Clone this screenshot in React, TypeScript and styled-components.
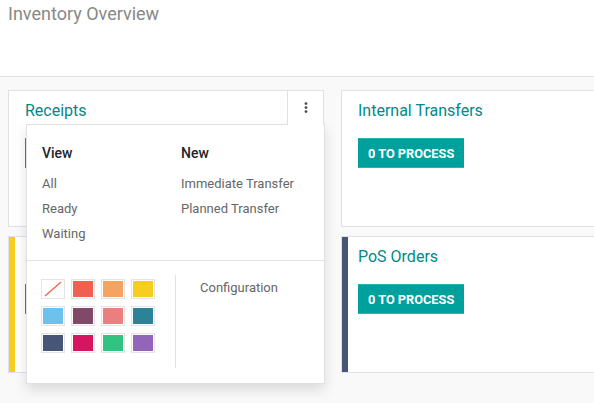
import React from "react";
import styled, { createGlobalStyle } from "styled-components";

const Global = createGlobalStyle`
  html, body { margin: 0; padding: 0; background: #f9f9f9; }
  body { font-family: Roboto, "Noto Sans", sans-serif; width: 594px; height: 403px; overflow: hidden; }
  * { box-sizing: border-box; }
`;

const Page = styled.div`
  width: 594px;
  height: 403px;
  overflow: hidden;
  display: flex;
  flex-direction: column;
`;

const ControlPanel = styled.div`
  height: 77px;
  background: #fff;
  border-bottom: 1px solid #dee2e6;
  padding: 2px 8px 0;
  flex-shrink: 0;
`;

const PageTitle = styled.h1`
  margin: 0;
  font-size: 18px;
  font-weight: 400;
  line-height: 24px;
  color: #888;
`;

const Board = styled.div`
  flex: 1;
  background: #f9f9f9;
  padding: 13px 0 0 8px;
  display: grid;
  grid-template-columns: 316px 316px;
  grid-auto-rows: 137px;
  column-gap: 17px;
  row-gap: 9px;
`;

const Card = styled.div<{ $accent?: string }>`
  position: relative;
  background: #fff;
  border: 1px solid #dee2e6;
  box-shadow: ${(p) => (p.$accent ? `inset 6px 0 0 ${p.$accent}` : "none")};
  padding: 8px 16px 0;
`;

const CardTitle = styled.div`
  font-size: 16px;
  line-height: 24px;
  color: #00898a;
  font-weight: 400;
`;

const ProcessButton = styled.button`
  margin-top: 15px;
  display: block;
  height: 30px;
  padding: 0 9px;
  background: #00a09d;
  border: 1px solid #2bb3b0;
  border-left-color: #00a09d;
  border-right-color: #00a09d;
  color: #fff;
  font-family: Roboto, sans-serif;
  font-weight: 700;
  font-size: 12.75px;
  text-transform: uppercase;
`;

const Toggle = styled.div`
  position: absolute;
  top: -1px;
  right: -1px;
  width: 37px;
  height: 35px;
  background: #fff;
  border-left: 1px solid #dee2e6;
  border-top: 1px solid #dee2e6;
  border-right: 1px solid #dee2e6;
  display: flex;
  justify-content: center;
  padding-top: 11px;
  z-index: 3;
`;

const Menu = styled.div`
  position: absolute;
  top: 33px;
  left: 17px;
  width: 299px;
  height: 260px;
  background: #fff;
  border: 1px solid #dee2e6;
  box-shadow: 0 6px 12px rgba(0, 0, 0, 0.12);
  z-index: 2;
  display: flex;
  flex-direction: column;
`;

const MenuTop = styled.div`
  display: grid;
  grid-template-columns: 139px 1fr;
  padding: 18px 15px 0;
  height: 136px;
  border-bottom: 1px solid #e2e2e2;
`;

const MenuCol = styled.div`
  display: flex;
  flex-direction: column;
`;

const MenuHeader = styled.div`
  font-size: 14px;
  font-weight: 500;
  color: #212529;
  line-height: 20px;
  margin-bottom: 8px;
`;

const MenuItem = styled.div`
  font-size: 13px;
  color: #666;
  line-height: 25px;
`;

const MenuBottom = styled.div`
  display: flex;
  padding: 14px 0 0 14px;
`;

const Swatches = styled.div`
  display: grid;
  grid-template-columns: repeat(4, 24px);
  grid-auto-rows: 20px;
  column-gap: 6px;
  row-gap: 7px;
  padding-top: 4px;
  width: 134px;
`;

const Swatch = styled.div<{ $color: string }>`
  border: 1px solid #e4e4e4;
  padding: 1px;
  background: #fff;
  &::after {
    content: "";
    display: block;
    width: 100%;
    height: 100%;
    background: ${(p) => p.$color};
  }
`;

const NoColor = styled.div`
  border: 1px solid #e4e4e4;
  background: #fff;
  display: flex;
`;

const Divider = styled.div`
  width: 1px;
  height: 93px;
  background: #e2e2e2;
`;

const ConfigLink = styled.div`
  font-size: 13px;
  color: #666;
  line-height: 20px;
  margin-left: 24px;
  padding-top: 3px;
`;

const colors = [
  "#f06050",
  "#f4a460",
  "#f7cd1f",
  "#6cc1ed",
  "#814968",
  "#eb7e7f",
  "#2c8397",
  "#475577",
  "#d6145f",
  "#30c381",
  "#9365b8",
];

const Kebab = () => (
  <svg width="4" height="12" viewBox="0 0 4 12">
    <circle cx="2" cy="1.6" r="1.4" fill="#4c4c4c" />
    <circle cx="2" cy="5.6" r="1.4" fill="#4c4c4c" />
    <circle cx="2" cy="9.6" r="1.4" fill="#4c4c4c" />
  </svg>
);

export default function App() {
  return (
    <Page>
      <Global />
      <ControlPanel>
        <PageTitle>Inventory Overview</PageTitle>
      </ControlPanel>
      <Board>
        <Card>
          <CardTitle>Receipts</CardTitle>
          <ProcessButton>0 To Process</ProcessButton>
          <Toggle>
            <Kebab />
          </Toggle>
          <Menu>
            <MenuTop>
              <MenuCol>
                <MenuHeader>View</MenuHeader>
                <MenuItem>All</MenuItem>
                <MenuItem>Ready</MenuItem>
                <MenuItem>Waiting</MenuItem>
              </MenuCol>
              <MenuCol>
                <MenuHeader>New</MenuHeader>
                <MenuItem>Immediate Transfer</MenuItem>
                <MenuItem>Planned Transfer</MenuItem>
              </MenuCol>
            </MenuTop>
            <MenuBottom>
              <Swatches>
                <NoColor>
                  <svg width="22" height="18" viewBox="0 0 22 18">
                    <line x1="3" y1="16" x2="19" y2="2" stroke="#f06050" strokeWidth="1.3" />
                  </svg>
                </NoColor>
                {colors.map((c) => (
                  <Swatch key={c} $color={c} />
                ))}
              </Swatches>
              <Divider />
              <ConfigLink>Configuration</ConfigLink>
            </MenuBottom>
          </Menu>
        </Card>
        <Card>
          <CardTitle>Internal Transfers</CardTitle>
          <ProcessButton>0 To Process</ProcessButton>
        </Card>
        <Card $accent="#f7cd1f">
          <CardTitle>Delivery Orders</CardTitle>
          <ProcessButton>0 To Process</ProcessButton>
        </Card>
        <Card $accent="#475577">
          <CardTitle>PoS Orders</CardTitle>
          <ProcessButton>0 To Process</ProcessButton>
        </Card>
      </Board>
    </Page>
  );
}
